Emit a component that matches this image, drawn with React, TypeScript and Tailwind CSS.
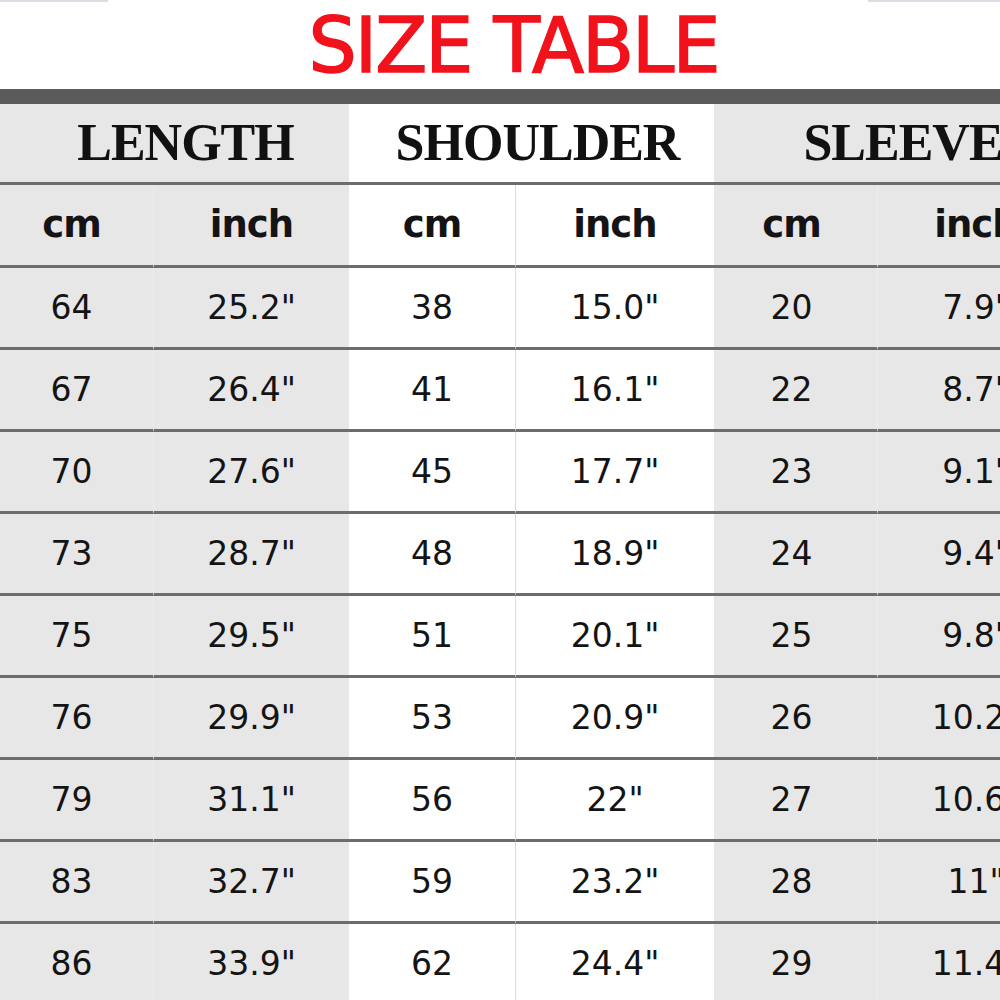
import React from 'react';

type Section = {
  title: string;
  pad: string;
  cmPad: string;
  bg: string;
  divider: string;
  rows: [string, string][];
};

const sections: Section[] = [
  {
    title: 'LENGTH',
    pad: 'pl-[22px]',
    cmPad: 'pr-[10px]',
    bg: 'bg-[#e7e7e7]',
    divider: 'border-[#ededed]',
    rows: [
      ['64', '25.2"'],
      ['67', '26.4"'],
      ['70', '27.6"'],
      ['73', '28.7"'],
      ['75', '29.5"'],
      ['76', '29.9"'],
      ['79', '31.1"'],
      ['83', '32.7"'],
      ['86', '33.9"'],
    ],
  },
  {
    title: 'SHOULDER',
    pad: 'pl-[12px]',
    cmPad: 'pr-0',
    bg: 'bg-white',
    divider: 'border-[#dadada]',
    rows: [
      ['38', '15.0"'],
      ['41', '16.1"'],
      ['45', '17.7"'],
      ['48', '18.9"'],
      ['51', '20.1"'],
      ['53', '20.9"'],
      ['56', '22"'],
      ['59', '23.2"'],
      ['62', '24.4"'],
    ],
  },
  {
    title: 'SLEEVE',
    pad: 'pl-[18px]',
    cmPad: 'pr-[8px]',
    bg: 'bg-[#e7e7e7]',
    divider: 'border-[#ededed]',
    rows: [
      ['20', '7.9"'],
      ['22', '8.7"'],
      ['23', '9.1"'],
      ['24', '9.4"'],
      ['25', '9.8"'],
      ['26', '10.2"'],
      ['27', '10.6"'],
      ['28', '11"'],
      ['29', '11.4"'],
    ],
  },
];

const line = 'border-b-[3px] border-b-[#6c6c6c]';

const SectionColumn: React.FC<{ s: Section; cmWidth: string; inchWidth: string }> = ({ s, cmWidth, inchWidth }) => (
  <div className={`flex flex-col shrink-0 ${s.bg}`}>
    <div
      className={`h-[81px] flex items-center justify-center ${s.pad} ${line} font-['Liberation_Serif',serif] font-bold text-[52px] tracking-[-1px] text-[#111] leading-none`}
    >
      {s.title}
    </div>
    {[['cm', 'inch'] as [string, string], ...s.rows].map(([cm, inch], i) => (
      <div key={i} className={`flex ${i === 0 ? 'h-[83px]' : 'h-[82px]'} shrink-0`}>
        <div
          className={`${cmWidth} flex items-center justify-center ${s.cmPad} border-r ${s.divider} ${line} ${
            i === 0 ? 'font-bold text-[37px] tracking-[-1px]' : 'text-[33px]'
          }`}
        >
          {cm}
        </div>
        <div
          className={`${inchWidth} flex items-center justify-center ${line} ${
            i === 0 ? 'font-bold text-[37px] tracking-[-1px]' : 'text-[33px]'
          }`}
        >
          {inch}
        </div>
      </div>
    ))}
  </div>
);

export default function App() {
  return (
    <div className="w-[1000px] h-[1000px] overflow-hidden bg-white text-[#141414] font-['DejaVu_Sans',sans-serif]">
      <div className="h-[89px] flex flex-col">
        <div className="flex justify-between h-[2px]">
          <div className="w-[108px] bg-[#dcdce4]" />
          <div className="w-[132px] bg-[#dcdce4]" />
        </div>
        <div className="mt-[6px] pl-[27px] text-center leading-none text-[76px] tracking-[-2px] text-[#f2121c] [-webkit-text-stroke:1.5px_#f2121c]">
          SIZE TABLE
        </div>
      </div>
      <div className="h-[15px] bg-[#5b5b5b]" />
      <div className="flex w-[1074px]">
        <SectionColumn s={sections[0]} cmWidth="w-[154px]" inchWidth="w-[195px]" />
        <SectionColumn s={sections[1]} cmWidth="w-[167px]" inchWidth="w-[198px]" />
        <SectionColumn s={sections[2]} cmWidth="w-[164px]" inchWidth="w-[196px]" />
      </div>
    </div>
  );
}
